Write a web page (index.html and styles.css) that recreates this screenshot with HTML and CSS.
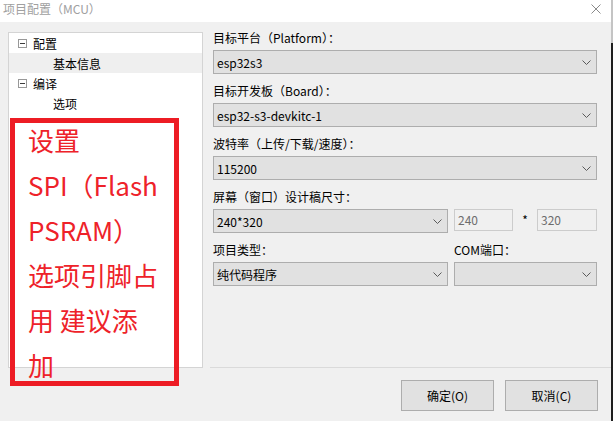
FILE: index.html
```html
<!DOCTYPE html>
<html lang="zh-CN">
<head>
    <meta charset="UTF-8">
    <title>项目配置（MCU）</title>
    <link rel="stylesheet" href="styles.css">
</head>
<body>
    <div class="window">
        <div class="titlebar">
            <span class="title">项目配置（MCU）</span>
            <svg class="close" width="10" height="10" viewBox="0 0 10 10">
                <path d="M0.5 0.5L9.5 9.5M9.5 0.5L0.5 9.5" stroke="#8a8a8a" stroke-width="1" fill="none"/>
            </svg>
        </div>

        <div class="content">
            <div class="tree">
                <div class="node"><span class="toggle"></span>配置</div>
                <div class="leaf selected">基本信息</div>
                <div class="node"><span class="toggle"></span>编译</div>
                <div class="leaf">选项</div>
            </div>

            <div class="main">
                <div class="form">
                    <div class="field">
                        <label>目标平台（Platform）：</label>
                        <div class="combo"><span>esp32s3</span><svg width="9" height="5" viewBox="0 0 9 5"><path d="M0.5 0.5L4.5 4.5L8.5 0.5" stroke="#5a5a5a" fill="none"/></svg></div>
                    </div>
                    <div class="field">
                        <label>目标开发板（Board）：</label>
                        <div class="combo"><span>esp32-s3-devkitc-1</span><svg width="9" height="5" viewBox="0 0 9 5"><path d="M0.5 0.5L4.5 4.5L8.5 0.5" stroke="#5a5a5a" fill="none"/></svg></div>
                    </div>
                    <div class="field">
                        <label>波特率（上传/下载/速度）：</label>
                        <div class="combo"><span>115200</span><svg width="9" height="5" viewBox="0 0 9 5"><path d="M0.5 0.5L4.5 4.5L8.5 0.5" stroke="#5a5a5a" fill="none"/></svg></div>
                    </div>
                    <div class="field">
                        <label>屏幕（窗口）设计稿尺寸：</label>
                        <div class="row">
                            <div class="combo wide"><span>240*320</span><svg width="9" height="5" viewBox="0 0 9 5"><path d="M0.5 0.5L4.5 4.5L8.5 0.5" stroke="#5a5a5a" fill="none"/></svg></div>
                            <div class="num">240</div>
                            <span class="times">*</span>
                            <div class="num last">320</div>
                        </div>
                    </div>
                    <div class="row">
                        <div class="field half">
                            <label>项目类型：</label>
                            <div class="combo"><span>纯代码程序</span><svg width="9" height="5" viewBox="0 0 9 5"><path d="M0.5 0.5L4.5 4.5L8.5 0.5" stroke="#5a5a5a" fill="none"/></svg></div>
                        </div>
                        <div class="field port">
                            <label>COM端口：</label>
                            <div class="combo"><span></span><svg width="9" height="5" viewBox="0 0 9 5"><path d="M0.5 0.5L4.5 4.5L8.5 0.5" stroke="#5a5a5a" fill="none"/></svg></div>
                        </div>
                    </div>
                </div>

                <div class="footer">
                    <button>确定(O)</button>
                    <button>取消(C)</button>
                </div>
            </div>
        </div>

        <div class="note">
            <span>设置</span>
            <span>SPI（Flash</span>
            <span>PSRAM）</span>
            <span>选项引脚占</span>
            <span>用 建议添</span>
            <span>加</span>
        </div>
    </div>
    <div class="edge"></div>
</body>
</html>
```

FILE: styles.css
```css
body {
    margin: 0;
    display: flex;
    background: #fff;
    font-family: "Noto Sans CJK SC", "Noto Sans", sans-serif;
    font-size: 12px;
    color: #000;
}

.window {
    position: relative;
    width: 611px;
    height: 421px;
    display: flex;
    flex-direction: column;
    background: #f0f0f0;
}

.edge {
    width: 2px;
    height: 421px;
    background: linear-gradient(#c4c4c4 0 43px, #1f1f1f 43px);
}

.titlebar {
    height: 22px;
    box-sizing: border-box;
    padding: 1px 10px 0 3px;
    background: #fff;
    display: flex;
    justify-content: space-between;
    align-items: flex-start;
}

.title {
    color: #a0a0a0;
    line-height: 15px;
}

.close {
    margin-top: 3px;
}

.content {
    flex: 1;
    display: flex;
}

.tree {
    width: 195px;
    height: 336px;
    box-sizing: border-box;
    margin: 10px 7px 0 8px;
    background: #fff;
    border: 1px solid #d4d4d4;
}

.node,
.leaf {
    height: 20px;
    display: flex;
    align-items: center;
}

.node {
    padding-left: 9px;
}

.leaf {
    padding-left: 44px;
}

.selected {
    background: #efefef;
}

.toggle {
    position: relative;
    width: 9px;
    height: 9px;
    box-sizing: border-box;
    border: 1px solid #989898;
    margin-right: 6px;
}

.toggle::after {
    content: "";
    position: absolute;
    left: 1px;
    top: 3px;
    width: 5px;
    height: 1px;
    background: #3c3c3c;
}

.main {
    flex: 1;
    display: flex;
    flex-direction: column;
}

.form {
    width: 384px;
    padding: 7px 0 0 3px;
    display: flex;
    flex-direction: column;
    gap: 8px;
}

.field label {
    display: block;
    line-height: 18px;
    margin-bottom: 3px;
}

.row {
    display: flex;
    align-items: flex-start;
}

.combo {
    height: 24px;
    box-sizing: border-box;
    border: 1px solid #adadad;
    background: #e1e1e1;
    padding: 0 5px 0 3px;
    display: flex;
    align-items: center;
    justify-content: space-between;
}

.combo.wide,
.half {
    width: 235px;
    margin-right: 6px;
}

.port {
    width: 143px;
}

.num {
    width: 59px;
    height: 22px;
    box-sizing: border-box;
    border: 1px solid #cccccc;
    background: #f0f0f0;
    color: #6d6d6d;
    padding-left: 3px;
    line-height: 20px;
}

.num.last {
    width: 60px;
}

.times {
    width: 24px;
    text-align: center;
    line-height: 22px;
}

.footer {
    margin-top: auto;
    border-top: 1px solid #dadada;
    padding: 12px 13px 10px 0;
    display: flex;
    justify-content: flex-end;
    gap: 11px;
}

.footer button {
    width: 93px;
    height: 31px;
    border: 1px solid #adadad;
    background: #e1e1e1;
    font-family: inherit;
    font-size: 12px;
    color: #000;
}

.note {
    position: absolute;
    left: 10px;
    top: 118px;
    width: 169px;
    height: 268px;
    box-sizing: border-box;
    border: 5px solid #ed1c24;
    padding-left: 13px;
    color: #ee2229;
    font-size: 26px;
    line-height: 45px;
    white-space: nowrap;
}

.note span {
    display: block;
}

.note span:first-child {
    margin-top: -6px;
}
```
